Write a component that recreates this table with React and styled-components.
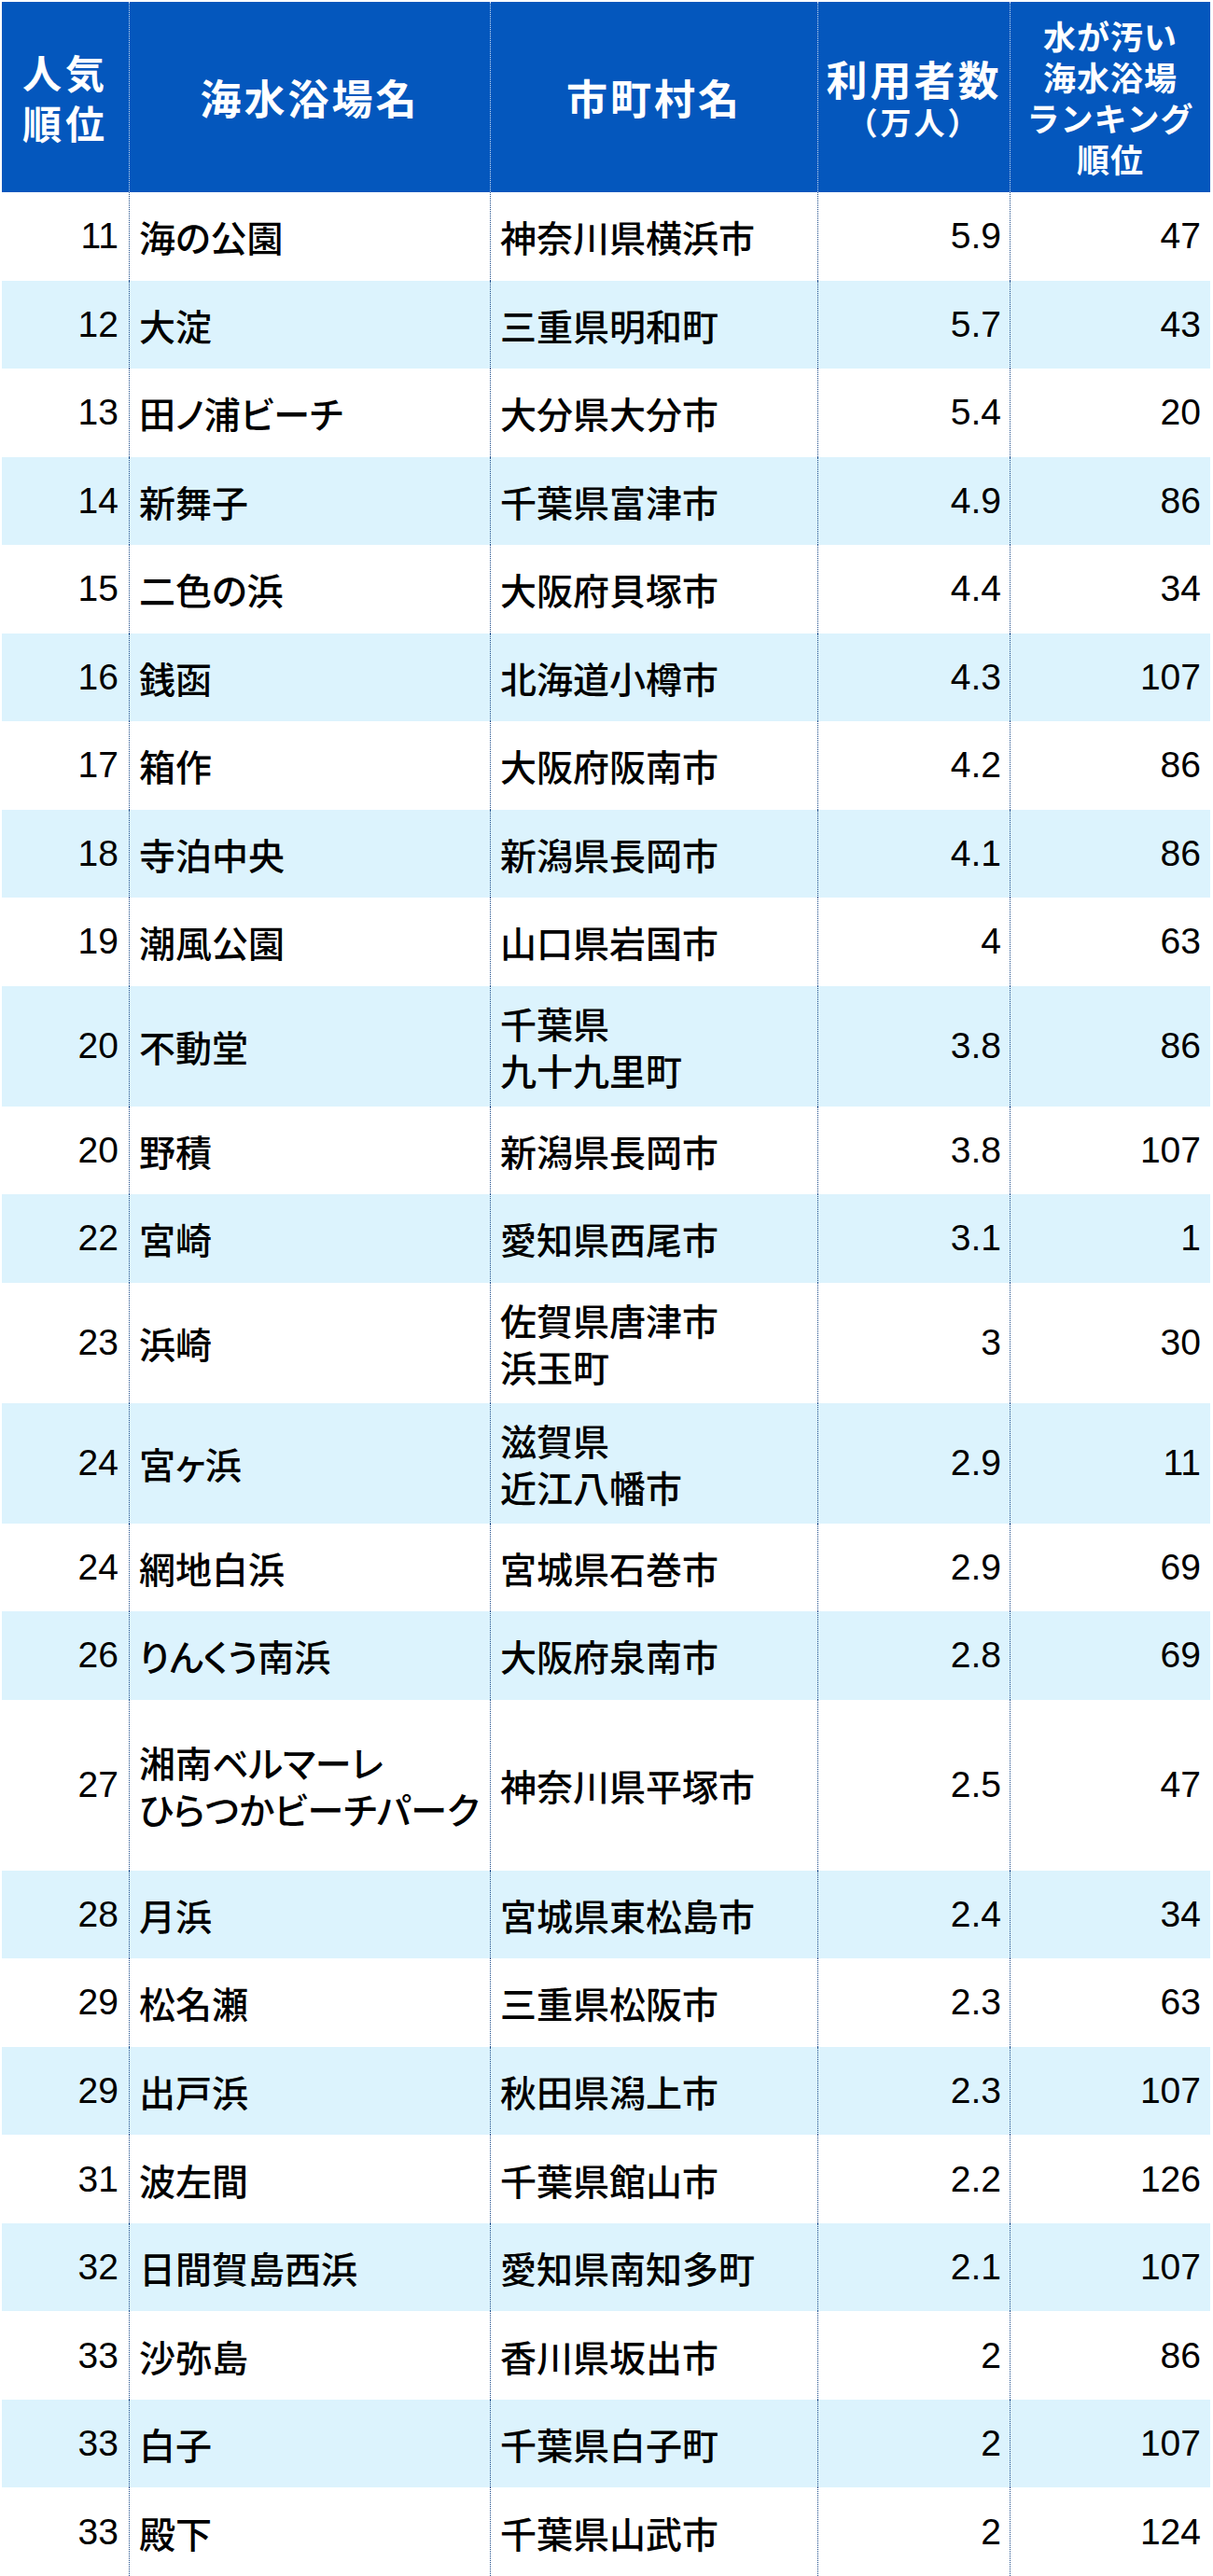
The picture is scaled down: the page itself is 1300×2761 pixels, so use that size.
import React from "react"
import styled, { createGlobalStyle } from "styled-components"

const GlobalStyle = createGlobalStyle`
  body {
    margin: 0;
    background: #ffffff;
    font-family: "Noto Sans CJK JP", sans-serif;
  }
`

const COLUMNS = "136px 387px 351px 206px 215px"
const ROW_HEIGHTS = { single: 94.52, double: 129, tall: 183 }

const rows = [
  ["11", "海の公園", "神奈川県横浜市", "5.9", "47"],
  ["12", "大淀", "三重県明和町", "5.7", "43"],
  ["13", "田ノ浦ビーチ", "大分県大分市", "5.4", "20"],
  ["14", "新舞子", "千葉県富津市", "4.9", "86"],
  ["15", "二色の浜", "大阪府貝塚市", "4.4", "34"],
  ["16", "銭函", "北海道小樽市", "4.3", "107"],
  ["17", "箱作", "大阪府阪南市", "4.2", "86"],
  ["18", "寺泊中央", "新潟県長岡市", "4.1", "86"],
  ["19", "潮風公園", "山口県岩国市", "4", "63"],
  ["20", "不動堂", "千葉県\n九十九里町", "3.8", "86", "double"],
  ["20", "野積", "新潟県長岡市", "3.8", "107"],
  ["22", "宮崎", "愛知県西尾市", "3.1", "1"],
  ["23", "浜崎", "佐賀県唐津市\n浜玉町", "3", "30", "double"],
  ["24", "宮ヶ浜", "滋賀県\n近江八幡市", "2.9", "11", "double"],
  ["24", "網地白浜", "宮城県石巻市", "2.9", "69"],
  ["26", "りんくう南浜", "大阪府泉南市", "2.8", "69"],
  ["27", "湘南ベルマーレ\nひらつかビーチパーク", "神奈川県平塚市", "2.5", "47", "tall"],
  ["28", "月浜", "宮城県東松島市", "2.4", "34"],
  ["29", "松名瀬", "三重県松阪市", "2.3", "63"],
  ["29", "出戸浜", "秋田県潟上市", "2.3", "107"],
  ["31", "波左間", "千葉県館山市", "2.2", "126"],
  ["32", "日間賀島西浜", "愛知県南知多町", "2.1", "107"],
  ["33", "沙弥島", "香川県坂出市", "2", "86"],
  ["33", "白子", "千葉県白子町", "2", "107"],
  ["33", "殿下", "千葉県山武市", "2", "124"],
]

const Page = styled.div`
  padding: 2px 3px 0 2px;
`

const Table = styled.div`
  display: flex;
  flex-direction: column;
`

const HeaderRow = styled.div`
  display: grid;
  grid-template-columns: ${COLUMNS};
  height: 204px;
  background: #0457bd;
  color: #ffffff;
  font-weight: 700;
`

const HeaderCell = styled.div`
  display: flex;
  flex-direction: column;
  align-items: center;
  justify-content: center;
  text-align: center;
  white-space: nowrap;
  font-size: ${props => props.size ?? 44}px;
  line-height: ${props => props.lh ?? 56}px;
  letter-spacing: ${props => props.ls ?? 3}px;
  border-left: ${props => (props.first ? "none" : "1px dotted rgba(255, 255, 255, 0.8)")};
`

const SubLabel = styled.span`
  font-size: 33px;
  line-height: 40px;
  letter-spacing: 3px;
`

const Row = styled.div`
  display: grid;
  grid-template-columns: ${COLUMNS};
  height: ${props => ROW_HEIGHTS[props.kind]}px;
  background: ${props => (props.striped ? "#dcf3fd" : "#ffffff")};
  color: #000000;
`

const TextCell = styled.div`
  display: flex;
  align-items: center;
  padding-left: 10px;
  font-size: 39px;
  font-weight: 500;
  line-height: 50px;
  white-space: pre;
  font-feature-settings: "palt";
  border-left: 1px dotted #1d4c8a;
`

const NumCell = styled.div`
  display: flex;
  align-items: center;
  justify-content: flex-end;
  padding-right: ${props => props.pad ?? 10}px;
  font-family: "Liberation Sans", sans-serif;
  font-size: 39px;
  border-left: ${props => (props.first ? "none" : "1px dotted #1d4c8a")};
`

const App = () => (
  <Page>
    <GlobalStyle />
    <Table>
      <HeaderRow>
        <HeaderCell first size={42} lh={54} ls={4}>
          <span>人気</span>
          <span>順位</span>
        </HeaderCell>
        <HeaderCell>海水浴場名</HeaderCell>
        <HeaderCell>市町村名</HeaderCell>
        <HeaderCell lh={52}>
          <span>利用者数</span>
          <SubLabel>（万人）</SubLabel>
        </HeaderCell>
        <HeaderCell size={35} lh={44} ls={1}>
          <span>水が汚い</span>
          <span>海水浴場</span>
          <span>ランキング</span>
          <span>順位</span>
        </HeaderCell>
      </HeaderRow>
      {rows.map(([rank, name, city, users, dirty, kind = "single"], i) => (
        <Row key={rank + name} kind={kind} striped={i % 2 === 1}>
          <NumCell first pad={11}>{rank}</NumCell>
          <TextCell>{name}</TextCell>
          <TextCell>{city}</TextCell>
          <NumCell pad={9}>{users}</NumCell>
          <NumCell>{dirty}</NumCell>
        </Row>
      ))}
    </Table>
  </Page>
)

export default App
